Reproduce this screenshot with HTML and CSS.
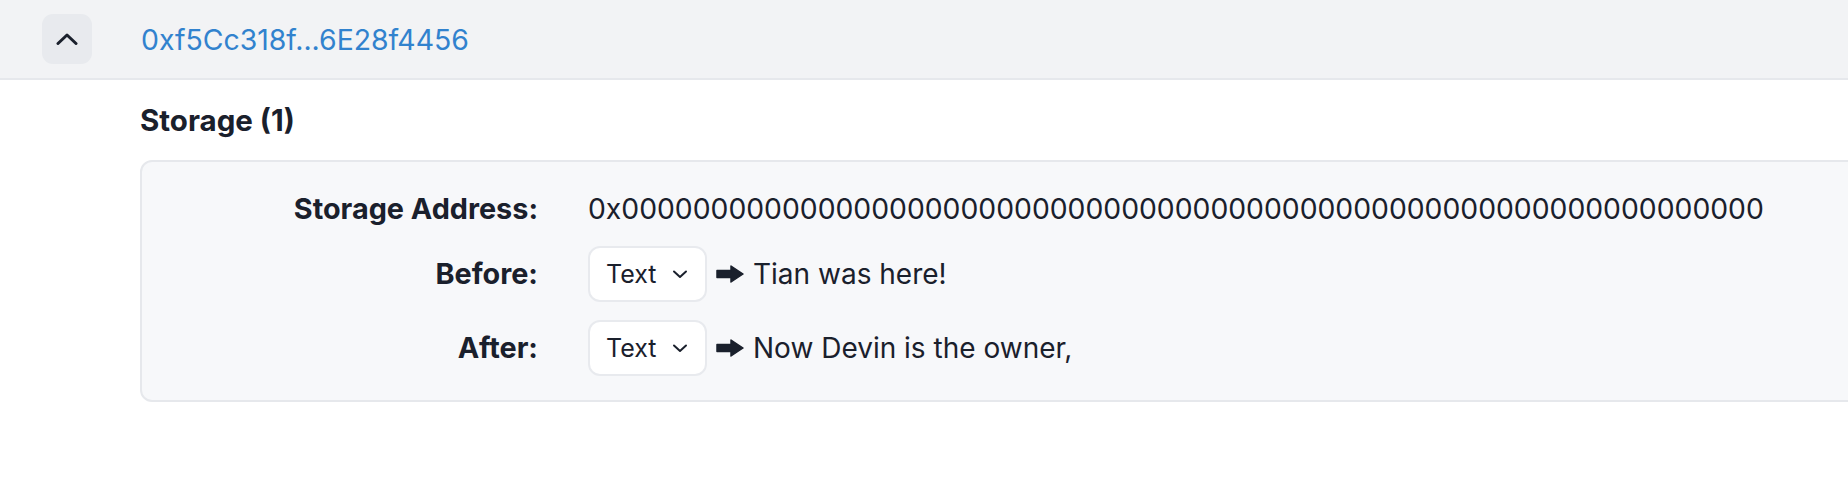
FILE: index.html
```html
<!DOCTYPE html>
<html>
<head>
<meta charset="utf-8">
<link rel="stylesheet" href="styles.css">
</head>
<body>
<div class="header">
  <button class="toggle" aria-label="collapse">
    <svg width="22" height="12" viewBox="0 0 22 12"><path d="M2 10.5 L11 2 L20 10.5" fill="none" stroke="#1a202c" stroke-width="3" stroke-linecap="round" stroke-linejoin="round"/></svg>
  </button>
  <a class="addr-link" href="#">0xf5Cc318f...6E28f4456</a>
</div>
<div class="section">
  <h2 class="section-title">Storage (1)</h2>
  <div class="card">
    <div class="grid">
      <div class="label">Storage Address:</div>
      <div class="value">0x0000000000000000000000000000000000000000000000000000000000000000</div>
      <div class="label">Before:</div>
      <div class="value change">
        <div class="select">Text<svg width="16" height="9" viewBox="0 0 16 9"><path d="M2 1.5 L8 7 L14 1.5" fill="none" stroke="#1a202c" stroke-width="2" stroke-linecap="round" stroke-linejoin="round"/></svg></div>
        <svg class="arrow" width="28" height="18" viewBox="0 0 28 18"><path d="M1 5.5 H15 V1 L27 9 L15 17 V12.5 H1 Z" fill="#1a202c" stroke="#1a202c" stroke-width="1.5" stroke-linejoin="round"/></svg>
        <span>Tian was here!</span>
      </div>
      <div class="label">After:</div>
      <div class="value change">
        <div class="select">Text<svg width="16" height="9" viewBox="0 0 16 9"><path d="M2 1.5 L8 7 L14 1.5" fill="none" stroke="#1a202c" stroke-width="2" stroke-linecap="round" stroke-linejoin="round"/></svg></div>
        <svg class="arrow" width="28" height="18" viewBox="0 0 28 18"><path d="M1 5.5 H15 V1 L27 9 L15 17 V12.5 H1 Z" fill="#1a202c" stroke="#1a202c" stroke-width="1.5" stroke-linejoin="round"/></svg>
        <span>Now Devin is the owner,</span>
      </div>
    </div>
  </div>
</div>
</body>
</html>
```
FILE: styles.css
```css
html, body {
  margin: 0;
  padding: 0;
  overflow: hidden;
}
body {
  font-family: Inter, "Noto Sans", sans-serif;
  color: #1a202c;
  background: #ffffff;
  font-size: 28px;
}
.header {
  height: 80px;
  box-sizing: border-box;
  background: #f2f3f5;
  border-bottom: 2px solid #e6e8ec;
  display: flex;
  align-items: center;
  padding-left: 42px;
  gap: 49px;
}
.toggle {
  width: 50px;
  height: 50px;
  border: none;
  border-radius: 11px;
  background: #e8eaee;
  display: flex;
  align-items: center;
  justify-content: center;
  padding: 0;
}
.addr-link {
  color: #3182ce;
  text-decoration: none;
  font-size: 28.4px;
}
.section {
  padding-left: 140px;
}
.section-title {
  margin: 0;
  padding-top: 22px;
  height: 80px;
  box-sizing: border-box;
  font-size: 29.5px;
  font-weight: 700;
  line-height: 36px;
}
.card {
  margin-right: -40px;
  background: #f7f8fa;
  border: 2px solid #e6e8ec;
  border-radius: 12px;
  padding: 28px 0 24px 0;
}
.grid {
  display: grid;
  grid-template-columns: 396px auto;
  column-gap: 50px;
  row-gap: 18px;
  align-items: center;
}
.label {
  text-align: right;
  font-weight: 700;
  font-size: 28.8px;
  line-height: 38px;
}
.value {
  font-size: 28.3px;
  line-height: 38px;
}
.change {
  display: flex;
  align-items: center;
  font-size: 28px;
}
.select {
  width: 119px;
  height: 56px;
  box-sizing: border-box;
  background: #ffffff;
  border: 2px solid #e8eaee;
  border-radius: 12px;
  display: flex;
  align-items: center;
  justify-content: space-between;
  padding: 0 17px 0 16px;
  font-size: 25px;
}
.arrow {
  margin: 0 9px;
}
```
